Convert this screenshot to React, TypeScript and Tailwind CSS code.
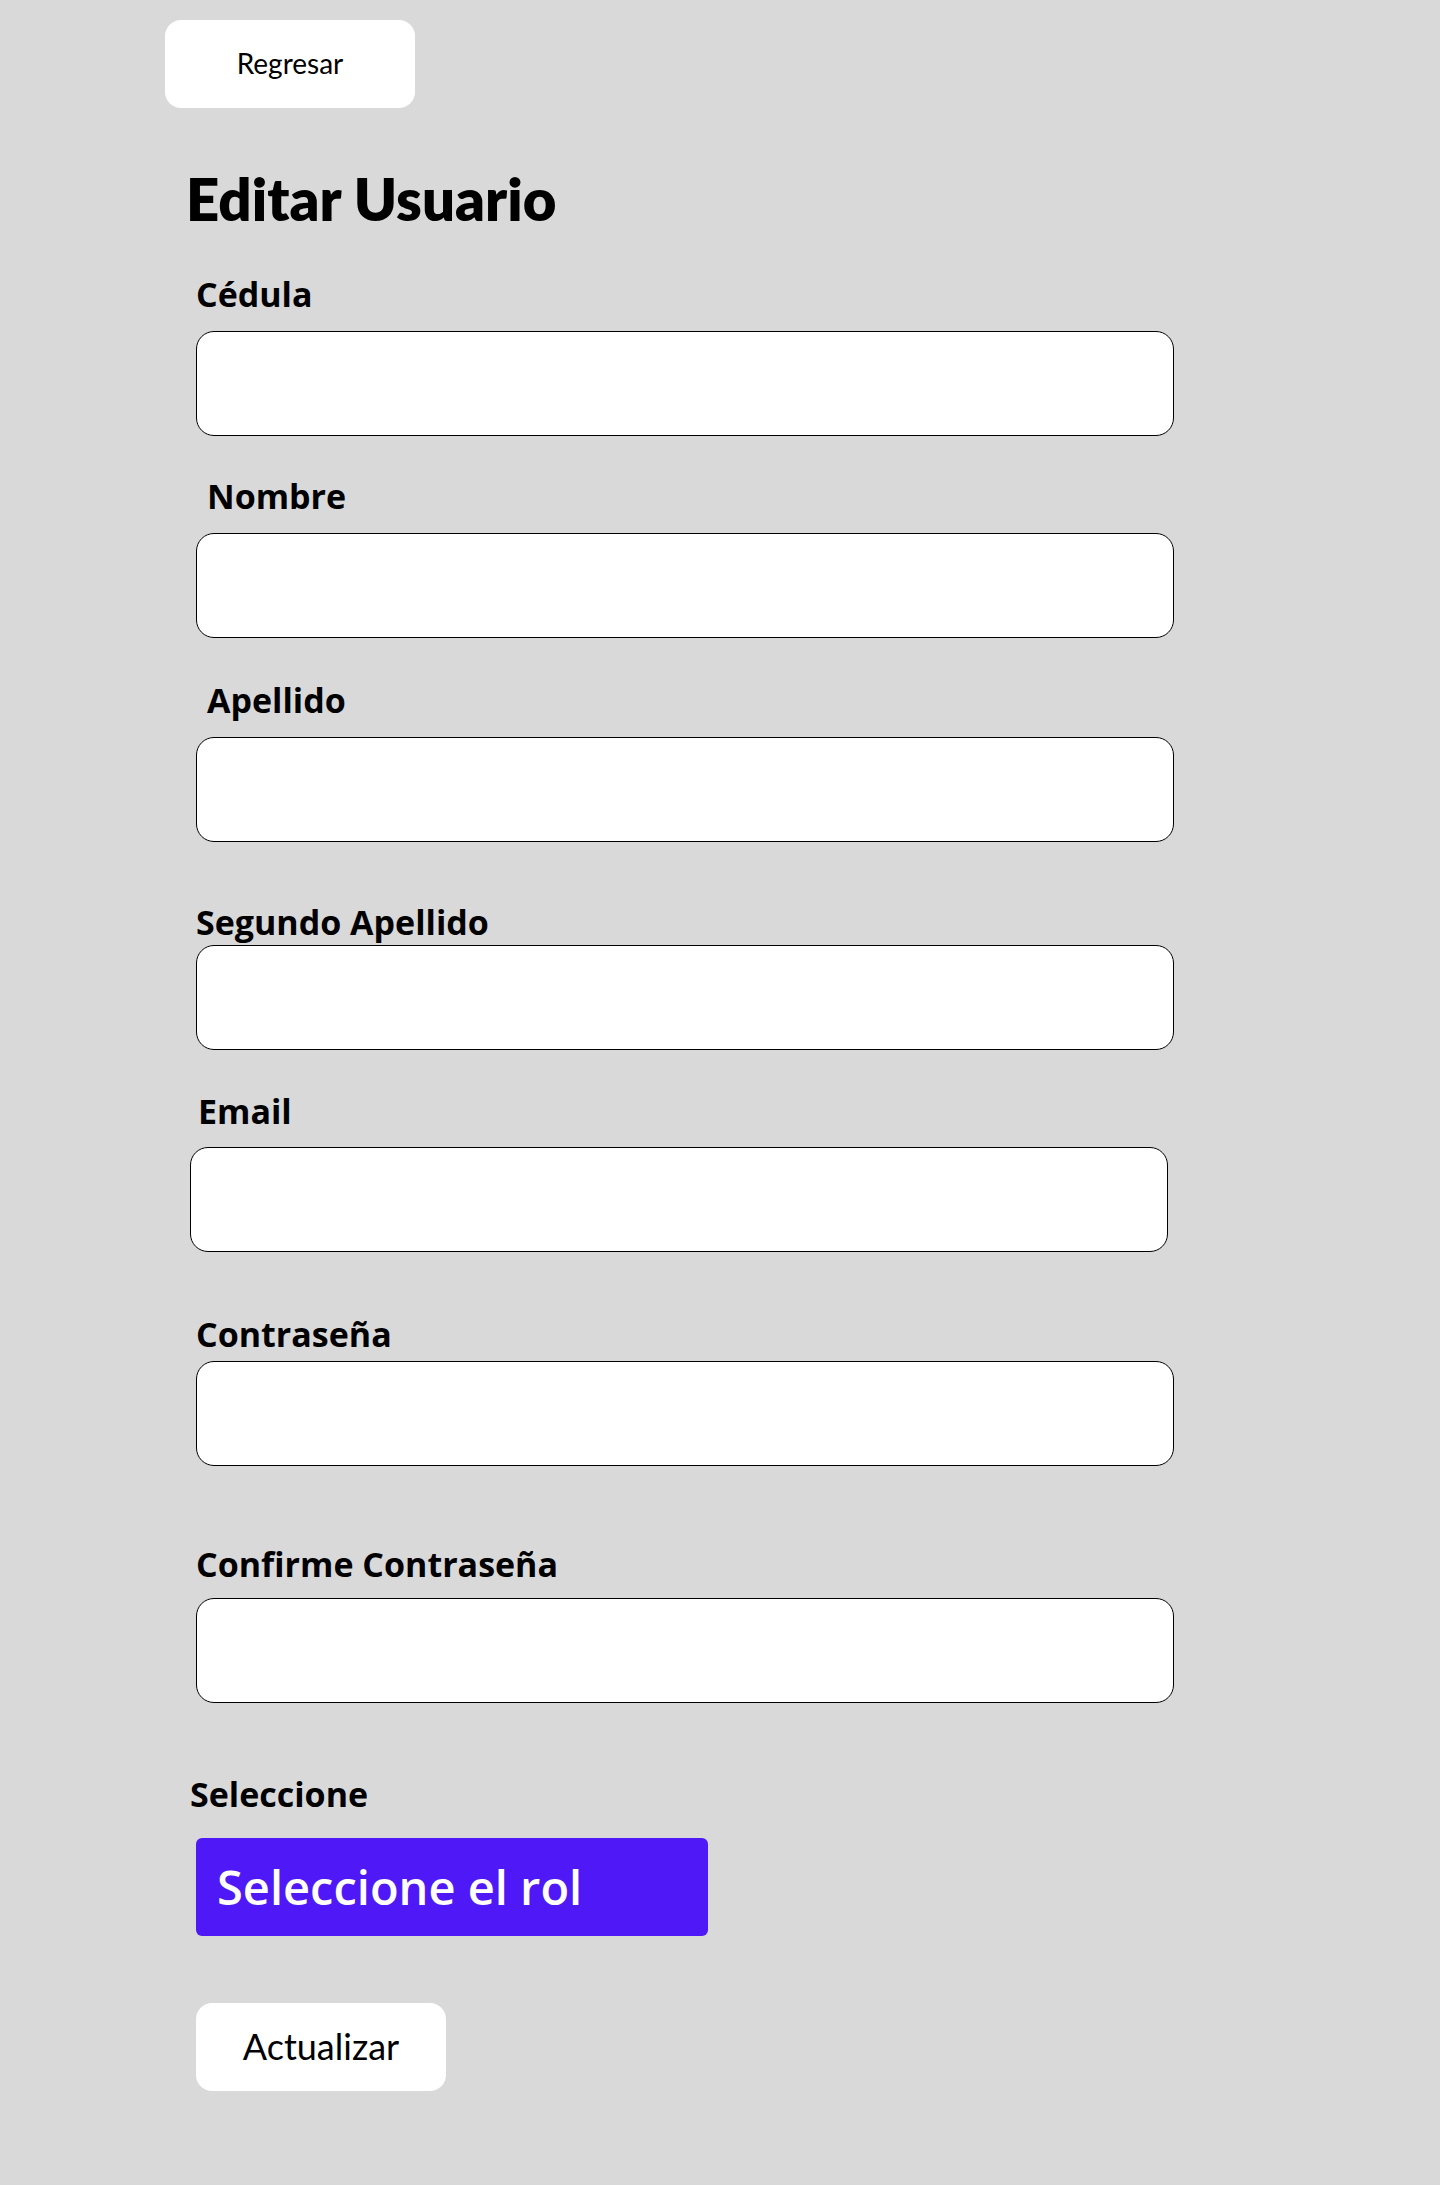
import React from 'react';

interface FieldProps {
  label: string;
  type?: string;
  labelClass: string;
  inputClass?: string;
}

function Field({ label, type = 'text', labelClass, inputClass = 'ml-[196px]' }: FieldProps) {
  return (
    <>
      <label className={`block font-['Open_Sans',sans-serif] text-[34px] font-bold leading-none text-black ${labelClass}`}>
        {label}
      </label>
      <input
        type={type}
        className={`block h-[105px] w-[978px] rounded-[18px] border border-black bg-white px-4 text-2xl outline-none ${inputClass}`}
      />
    </>
  );
}

export default function App() {
  return (
    <div className="min-h-[2185px] w-full bg-[#d9d9d9] pt-[20px] pb-[95px]">
      <button
        type="button"
        className="ml-[165px] flex h-[88px] w-[250px] items-center justify-center rounded-[16px] bg-white pb-[3px] font-['Lato',sans-serif] text-[28px] text-black"
      >
        Regresar
      </button>

      <h1 className="ml-[186px] mt-[62px] font-['Lato',sans-serif] text-[58px] font-extrabold leading-none text-black">
        Editar Usuario
      </h1>

      <form className="flex flex-col" onSubmit={(e) => e.preventDefault()}>
        <Field label="Cédula" labelClass="ml-[196px] mt-[49px] mb-[20px]" />
        <Field label="Nombre" labelClass="ml-[207px] mt-[43px] mb-[20px]" />
        <Field label="Apellido" labelClass="ml-[207px] mt-[45px] mb-[20px]" />
        <Field label="Segundo Apellido" labelClass="ml-[196px] mt-[63px] mb-[6px]" />
        <Field
          label="Email"
          type="email"
          labelClass="ml-[198px] mt-[44px] mb-[19px]"
          inputClass="ml-[190px]"
        />
        <Field label="Contraseña" type="password" labelClass="ml-[196px] mt-[65px] mb-[10px]" />
        <Field label="Confirme Contraseña" type="password" labelClass="ml-[196px] mt-[81px] mb-[17px]" />

        <label className="ml-[190px] mt-[74px] mb-[27px] block font-['Open_Sans',sans-serif] text-[34px] font-bold leading-none text-black">
          Seleccione
        </label>
        <div className="ml-[196px] flex h-[98px] w-[512px] items-center rounded-[6px] bg-[#4f19f7] pl-[21px] font-['Open_Sans',sans-serif] text-[47px] font-semibold leading-none text-white">
          Seleccione el rol
        </div>

        <button
          type="submit"
          className="ml-[196px] mt-[67px] flex h-[88px] w-[250px] items-center justify-center rounded-[16px] bg-white pb-[2px] font-['Lato',sans-serif] text-[36px] text-black"
        >
          Actualizar
        </button>
      </form>
    </div>
  );
}
